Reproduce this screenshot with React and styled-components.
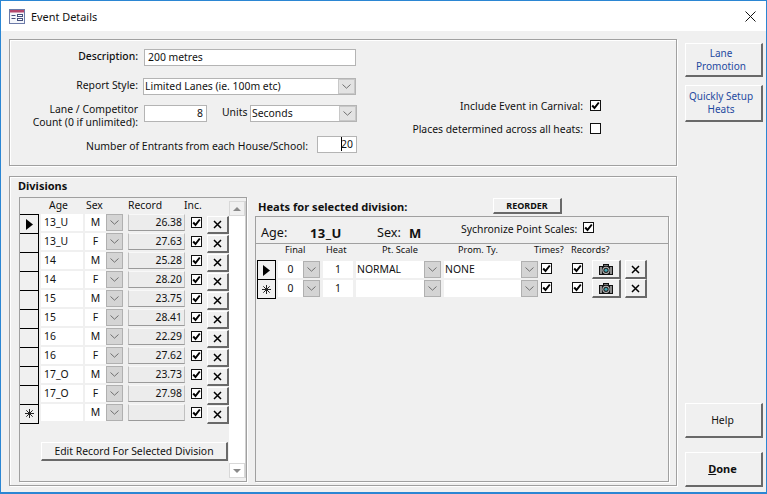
import React from "react";
import styled, { createGlobalStyle } from "styled-components";

const divisions = [
  { age: "13_U", sex: "M", record: "26.38", current: true },
  { age: "13_U", sex: "F", record: "27.63" },
  { age: "14", sex: "M", record: "25.28" },
  { age: "14", sex: "F", record: "28.20" },
  { age: "15", sex: "M", record: "23.75" },
  { age: "15", sex: "F", record: "28.41" },
  { age: "16", sex: "M", record: "22.29" },
  { age: "16", sex: "F", record: "27.62" },
  { age: "17_O", sex: "M", record: "23.73" },
  { age: "17_O", sex: "F", record: "27.98" },
  { age: "", sex: "M", record: "", isNew: true },
];

const heats = [
  { final: "0", heat: "1", scale: "NORMAL", prom: "NONE", current: true },
  { final: "0", heat: "1", scale: "", prom: "", isNew: true },
];

const heatHeads = [
  ["Final", 41],
  ["Heat", 56],
  ["Pt. Scale", 76],
  ["Prom. Ty.", 76],
  ["Times?", 37],
  ["Records?", 40],
];

const Chevron = () => (
  <svg width="9" height="5" viewBox="0 0 9 5">
    <path d="M0.5 0.5 L4.5 4.2 L8.5 0.5" fill="none" stroke="#707070" />
  </svg>
);

const CheckBox = ({ checked = true }) => (
  <CheckFrame>
    {checked && (
      <svg width="9" height="9" viewBox="0 0 9 9">
        <path d="M1.2 4.5 L3.5 7 L7.8 1.5" fill="none" stroke="#000" strokeWidth="2" />
      </svg>
    )}
  </CheckFrame>
);

const Cross = () => (
  <svg width="9" height="9" viewBox="0 0 9 9">
    <path d="M1 1 L8 8 M8 1 L1 8" stroke="#000" strokeWidth="1.5" />
  </svg>
);

const Camera = () => (
  <svg width="14" height="11" viewBox="0 0 14 11">
    <path d="M4 0 H10 V2 H14 V11 H0 V2 H4 Z" fill="#111" />
    <rect x="5" y="1" width="4" height="1" fill="#777" />
    <rect x="1" y="3" width="2" height="7" fill="#8c8c8c" />
    <rect x="11" y="3" width="2" height="7" fill="#8c8c8c" />
    <circle cx="7" cy="6.3" r="3.6" fill="#bbb" />
    <circle cx="7" cy="6.3" r="2.6" fill="#222" />
    <circle cx="7" cy="6.3" r="1.5" fill="#3fa7b5" />
  </svg>
);

const Marker = ({ isNew, current }) => (
  <>
    {current && (
      <svg width="7" height="11" viewBox="0 0 7 11">
        <path d="M0 0 L7 5.5 L0 11 Z" fill="#000" />
      </svg>
    )}
    {isNew && (
      <svg width="9" height="9" viewBox="0 0 9 9">
        <path d="M4.5 0 V9 M0 4.5 H9 M1.3 1.3 L7.7 7.7 M7.7 1.3 L1.3 7.7" stroke="#222" strokeWidth="1" />
      </svg>
    )}
  </>
);

const Combo = ({ $muted }) => (
  <ComboButton $muted={$muted}>
    <Chevron />
  </ComboButton>
);

export default function App() {
  return (
    <>
      <GlobalStyle />
      <Dialog>
        <TitleBar>
          <svg width="16" height="15" viewBox="0 0 16 15">
            <rect x="0.5" y="0.5" width="15" height="14" fill="#f4f6fb" stroke="#6b7aa8" />
            <rect x="1" y="1" width="14" height="2.5" fill="#b4476c" />
            <path d="M2.5 6.5 H6.5 M2.5 9.5 H6.5" stroke="#44507c" />
            <rect x="8.5" y="5.5" width="5" height="2" fill="#fff" stroke="#44507c" />
            <rect x="8.5" y="9.5" width="5" height="2" fill="#fff" stroke="#44507c" />
          </svg>
          <TitleText>Event Details</TitleText>
          <CloseIcon width="11" height="11" viewBox="0 0 11 11">
            <path d="M0.5 0.5 L10.5 10.5 M10.5 0.5 L0.5 10.5" stroke="#111" />
          </CloseIcon>
        </TitleBar>

        <Body>
          <MainColumn>
            <TopPanel>
              <FormColumn>
                <FormRow $top={0}>
                  <RowLabel $strong $shift={1}>Description:</RowLabel>
                  <Field $width={212}>200 metres</Field>
                </FormRow>
                <FormRow $top={12}>
                  <RowLabel $shift={1}>Report Style:</RowLabel>
                  <ComboField $width={213}>
                    <ComboText>Limited Lanes (ie. 100m etc)</ComboText>
                    <Combo />
                  </ComboField>
                </FormRow>
                <FormRow $top={10}>
                  <RowLabel $shift={-2}>
                    Lane / Competitor
                    <br />
                    Count (0 if unlimited):
                  </RowLabel>
                  <Field $width={63} $right>8</Field>
                  <UnitsLabel>Units</UnitsLabel>
                  <ComboField $width={107}>
                    <ComboText>Seconds</ComboText>
                    <Combo />
                  </ComboField>
                </FormRow>
                <EntrantsRow>
                  <EntrantsLabel>Number of Entrants from each House/School:</EntrantsLabel>
                  <Field $width={40} $right>
                    <Caret />
                    20
                  </Field>
                </EntrantsRow>
              </FormColumn>
              <OptionsColumn>
                <OptionRow>
                  <span>Include Event in Carnival:</span>
                  <CheckBox />
                </OptionRow>
                <OptionRow>
                  <span>Places determined across all heats:</span>
                  <CheckBox checked={false} />
                </OptionRow>
              </OptionsColumn>
            </TopPanel>

            <BottomPanel>
              <DivisionsColumn>
                <SectionTitle>Divisions</SectionTitle>
                <DivisionsBox>
                  <DivisionsList>
                    <DivisionHead>
                      <HeadLabel $width={37} $pad={29}>Age</HeadLabel>
                      <HeadLabel $width={42}>Sex</HeadLabel>
                      <HeadLabel $width={56}>Record</HeadLabel>
                      <HeadLabel $width={30}>Inc.</HeadLabel>
                    </DivisionHead>
                    {divisions.map((d, idx) => (
                      <DivisionRow key={idx}>
                        <RowMarker $first={idx === 0}>
                          <Marker isNew={d.isNew} current={d.current} />
                        </RowMarker>
                        <GridCell>{d.age}</GridCell>
                        <SexCell>
                          <SexText>{d.sex}</SexText>
                          <Combo $muted />
                        </SexCell>
                        <RecordCell>{d.record}</RecordCell>
                        <CheckCell>
                          <CheckBox />
                        </CheckCell>
                        <CrossButton $top={2}>
                          <Cross />
                        </CrossButton>
                      </DivisionRow>
                    ))}
                    <EditButton>Edit Record For Selected Division</EditButton>
                  </DivisionsList>
                  <ScrollBar>
                    <ScrollArrow>
                      <ArrowUp />
                    </ScrollArrow>
                    <ScrollTrack />
                    <ScrollArrow $plain>
                      <ArrowDown />
                    </ScrollArrow>
                  </ScrollBar>
                </DivisionsBox>
              </DivisionsColumn>

              <HeatsColumn>
                <HeatsTitleRow>
                  <HeatsTitle>Heats for selected division:</HeatsTitle>
                  <ReorderButton>REORDER</ReorderButton>
                </HeatsTitleRow>
                <HeatsBox>
                  <HeatsInfo>
                    <InfoLabel $width={49}>Age:</InfoLabel>
                    <InfoValue $width={67}>13_U</InfoValue>
                    <InfoLabel $width={32}>Sex:</InfoLabel>
                    <InfoValue $width={52}>M</InfoValue>
                    <SyncLabel>Sychronize Point Scales:</SyncLabel>
                    <SyncCheck>
                      <CheckBox />
                    </SyncCheck>
                  </HeatsInfo>
                  <HeatsHead>
                    {heatHeads.map(([label, width]) => (
                      <HeatHeadLabel key={label} $width={width}>
                        {label}
                      </HeatHeadLabel>
                    ))}
                  </HeatsHead>
                  {heats.map((h, idx) => (
                    <HeatRow key={idx}>
                      <HeatMarker>
                        <Marker isNew={h.isNew} current={h.current} />
                      </HeatMarker>
                      <HeatCell $center>
                        <HeatValue>{h.final}</HeatValue>
                        <Combo $muted />
                      </HeatCell>
                      <HeatCell $center>
                        <HeatValue>{h.heat}</HeatValue>
                      </HeatCell>
                      <HeatCell>
                        <HeatValue>{h.scale}</HeatValue>
                        <Combo $muted />
                      </HeatCell>
                      <HeatCell>
                        <HeatValue>{h.prom}</HeatValue>
                        <Combo $muted />
                      </HeatCell>
                      <CheckCell>
                        <CheckBox />
                      </CheckCell>
                      <CheckCell>
                        <CheckBox />
                      </CheckCell>
                      <CameraButton>
                        <Camera />
                      </CameraButton>
                      <CrossButton>
                        <Cross />
                      </CrossButton>
                    </HeatRow>
                  ))}
                </HeatsBox>
              </HeatsColumn>
            </BottomPanel>
          </MainColumn>

          <SideColumn>
            <SideButton $height={34} $blue>
              Lane
              <br />
              Promotion
            </SideButton>
            <SideButton $height={37} $blue $top={8}>
              Quickly Setup
              <br />
              Heats
            </SideButton>
            <SideButton $height={35} $top={281}>Help</SideButton>
            <SideButton $height={35} $top={14} $strong>
              <u>D</u>one
            </SideButton>
          </SideColumn>
        </Body>
      </Dialog>
    </>
  );
}

const GlobalStyle = createGlobalStyle`
  html, body {
    margin: 0;
    padding: 0;
    background: #f0f0f0;
  }
  body {
    font-family: "Noto Sans", "Liberation Sans", sans-serif;
    font-size: 10.4px;
    color: #111;
  }
  * {
    box-sizing: border-box;
  }
`;

const raised = `
  background: #f0f0f0;
  border-top: 1px solid #fff;
  border-left: 1px solid #fff;
  border-right: 2px solid #696969;
  border-bottom: 2px solid #696969;
`;

const Dialog = styled.div`
  width: 767px;
  height: 494px;
  border: 1px solid #2b86d3;
  border-bottom-width: 2px;
  background: #f0f0f0;
  overflow: hidden;
`;

const TitleBar = styled.div`
  display: flex;
  align-items: center;
  height: 30px;
  padding: 0 10px 0 8px;
  background: #fff;
`;

const TitleText = styled.div`
  margin-left: 6px;
  font-size: 10.9px;
`;

const CloseIcon = styled.svg`
  margin-left: auto;
`;

const Body = styled.div`
  display: flex;
  gap: 8px;
  padding: 8px 0 0 8px;
`;

const MainColumn = styled.div`
  display: flex;
  flex-direction: column;
  gap: 10px;
  width: 668px;
`;

const Panel = styled.div`
  display: flex;
  border: 1px solid #a0a0a0;
  box-shadow: 1px 1px 0 #fff, inset 1px 1px 0 #fff;
`;

const TopPanel = styled(Panel)`
  height: 127px;
  padding-top: 9px;
`;

const FormColumn = styled.div`
  width: 347px;
  display: flex;
  flex-direction: column;
`;

const FormRow = styled.div`
  display: flex;
  align-items: flex-start;
  height: 17px;
  margin-top: ${(p) => p.$top}px;
`;

const RowLabel = styled.div`
  width: 128px;
  margin: ${(p) => p.$shift}px 6px 0 0;
  flex-shrink: 0;
  text-align: right;
  line-height: 13px;
  font-weight: ${(p) => (p.$strong ? 500 : 400)};
`;

const Field = styled.div`
  width: ${(p) => p.$width}px;
  height: 17px;
  padding: 0 3px;
  line-height: 15px;
  background: #fff;
  border: 1px solid #b4b4b4;
  text-align: ${(p) => (p.$right ? "right" : "left")};
`;

const Caret = styled.span`
  display: inline-block;
  width: 1px;
  height: 14px;
  margin-right: -1px;
  vertical-align: -3px;
  background: #000;
`;

const ComboField = styled.div`
  display: flex;
  width: ${(p) => p.$width}px;
  height: 17px;
  margin-left: -1px;
  background: #fff;
  border: 1px solid #b4b4b4;
`;

const ComboText = styled.div`
  flex: 1;
  padding-left: 1px;
  line-height: 15px;
`;

const ComboButton = styled.div`
  flex-shrink: 0;
  width: 17px;
  display: flex;
  align-items: center;
  justify-content: center;
  background: ${(p) => (p.$muted ? "#d4d4d4" : "#e3e3e3")};
  border: 1px solid ${(p) => (p.$muted ? "#b0b0b0" : "#c8c8c8")};
`;

const UnitsLabel = styled.div`
  width: 29px;
  margin-left: 15px;
  line-height: 15px;
`;

const EntrantsRow = styled.div`
  display: flex;
  justify-content: flex-end;
  align-items: center;
  gap: 9px;
  height: 17px;
  margin-top: 14px;
`;

const EntrantsLabel = styled.span`
  padding-top: 2px;
`;

const OptionsColumn = styled.div`
  width: 244px;
  padding-top: 50px;
  display: flex;
  flex-direction: column;
  gap: 10px;
`;

const OptionRow = styled.div`
  display: flex;
  justify-content: flex-end;
  align-items: center;
  gap: 7px;
  height: 13px;
`;

const CheckFrame = styled.div`
  flex-shrink: 0;
  display: flex;
  align-items: center;
  justify-content: center;
  width: 11px;
  height: 11px;
  background: #fff;
  border: 1px solid #111;
`;

const BottomPanel = styled(Panel)`
  height: 310px;
  padding: 1px 0 0 8px;
  gap: 8px;
`;

const SectionTitle = styled.div`
  font-size: 11px;
  font-weight: 700;
  line-height: 15px;
`;

const DivisionsColumn = styled.div`
  width: 229px;
  display: flex;
  flex-direction: column;
`;

const DivisionsBox = styled.div`
  display: flex;
  height: 285px;
  margin: 4px 0 0 1px;
  border: 1px solid #a0a0a0;
  box-shadow: 1px 1px 0 #fff;
`;

const DivisionsList = styled.div`
  width: 210px;
  display: flex;
  flex-direction: column;
`;

const DivisionHead = styled.div`
  display: flex;
  height: 16px;
`;

const HeadLabel = styled.div`
  width: ${(p) => p.$width + (p.$pad || 0)}px;
  padding-left: ${(p) => p.$pad || 0}px;
  line-height: 14px;
`;

const DivisionRow = styled.div`
  display: grid;
  grid-template-columns: 21px 44px 43px 63px 16px 22px;
  height: 19px;
`;

const RowMarker = styled.div`
  display: flex;
  align-items: center;
  justify-content: center;
  width: 19px;
  border-right: 1px solid #000;
  border-bottom: 1px solid #000;
  border-top: ${(p) => (p.$first ? "1px solid #000" : "0")};
`;

const GridCell = styled.div`
  width: 42px;
  height: 17px;
  padding-left: 3px;
  line-height: 16px;
  background: #fff;
`;

const SexCell = styled.div`
  display: flex;
  width: 38px;
  height: 17px;
  background: #fff;
`;

const SexText = styled.div`
  flex: 1;
  text-align: center;
  line-height: 16px;
`;

const RecordCell = styled.div`
  width: 57px;
  height: 17px;
  padding-right: 2px;
  text-align: right;
  line-height: 14px;
  background: #ececec;
  border-left: 1px solid #c0c0c0;
  border-top: 1px solid #f8f8f8;
  border-bottom: 1px solid #9a9a9a;
  border-right: 1px solid #c0c0c0;
`;

const CheckCell = styled.div`
  display: flex;
  align-items: flex-start;
  padding-top: 3px;
`;

const CrossButton = styled.div`
  ${raised}
  display: flex;
  align-items: center;
  justify-content: center;
  width: 22px;
  height: ${(p) => (p.$top ? 18 : 19)}px;
  margin-top: ${(p) => p.$top || 0}px;
`;

const EditButton = styled.div`
  ${raised}
  width: 187px;
  height: 19px;
  margin: 19px 0 0 21px;
  text-align: center;
  line-height: 16px;
`;

const ScrollBar = styled.div`
  display: flex;
  flex-direction: column;
  width: 17px;
  margin: 3px 0;
  background: #fff;
  border-right: 1px solid #d0d0d0;
`;

const ScrollArrow = styled.div`
  display: flex;
  align-items: center;
  justify-content: center;
  height: 15px;
  background: ${(p) => (p.$plain ? "#fff" : "#f0f0f0")};
  border: 1px solid #d8d8d8;
`;

const ArrowUp = styled.div`
  border-left: 4px solid transparent;
  border-right: 4px solid transparent;
  border-bottom: 4px solid #8a8a8a;
`;

const ArrowDown = styled.div`
  border-left: 4px solid transparent;
  border-right: 4px solid transparent;
  border-top: 4px solid #8a8a8a;
`;

const ScrollTrack = styled.div`
  flex: 1;
`;

const HeatsColumn = styled.div`
  width: 414px;
  display: flex;
  flex-direction: column;
`;

const HeatsTitleRow = styled.div`
  display: flex;
  align-items: flex-end;
  height: 16px;
  margin-top: 20px;
  margin-bottom: 2px;
  padding-left: 3px;
`;

const HeatsTitle = styled(SectionTitle)`
  width: 235px;
  font-size: 11.1px;
`;

const ReorderButton = styled.div`
  ${raised}
  width: 69px;
  height: 16px;
  font-size: 9px;
  font-weight: 700;
  text-align: center;
  line-height: 13px;
`;

const HeatsBox = styled.div`
  height: 266px;
  border: 1px solid #a0a0a0;
  box-shadow: 1px 1px 0 #fff;
`;

const HeatsInfo = styled.div`
  display: flex;
  align-items: center;
  height: 27px;
  padding-left: 5px;
  border-bottom: 1px solid #a0a0a0;
`;

const InfoLabel = styled.div`
  width: ${(p) => p.$width}px;
  padding-top: 4px;
  font-size: 12.6px;
`;

const InfoValue = styled.div`
  width: ${(p) => p.$width}px;
  padding-top: 5px;
  font-size: 13px;
  font-weight: 700;
  letter-spacing: 0.4px;
`;

const SyncLabel = styled.div`
  width: 122px;
  white-space: nowrap;
  padding-bottom: 3px;
`;

const SyncCheck = styled.div`
  padding-bottom: 5px;
`;

const HeatsHead = styled.div`
  display: flex;
  height: 16px;
  padding-left: 29px;
`;

const HeatHeadLabel = styled.div`
  width: ${(p) => p.$width}px;
  font-size: 9.2px;
  line-height: 12px;
`;

const HeatRow = styled.div`
  display: grid;
  grid-template-columns: 21px 45px 33px 88px 97px 31px 20px 33px 22px;
  height: 19px;
  padding-left: 1px;
`;

const HeatMarker = styled.div`
  display: flex;
  align-items: center;
  justify-content: center;
  width: 19px;
  border: 1px solid #000;
  margin-bottom: -1px;
`;

const HeatCell = styled.div`
  display: flex;
  height: 17px;
  margin: 1px 3px 0 0;
  background: #fff;
  text-align: ${(p) => (p.$center ? "center" : "left")};
`;

const HeatValue = styled.div`
  flex: 1;
  padding: 0 1px;
  line-height: 16px;
`;

const CameraButton = styled.div`
  ${raised}
  display: flex;
  align-items: center;
  justify-content: center;
  width: 29px;
  height: 19px;
`;

const SideColumn = styled.div`
  display: flex;
  flex-direction: column;
  width: 78px;
  padding-top: 4px;
`;

const SideButton = styled.div`
  ${raised}
  display: flex;
  align-items: center;
  justify-content: center;
  text-align: center;
  height: ${(p) => p.$height}px;
  margin-top: ${(p) => p.$top || 0}px;
  padding-right: ${(p) => (p.$blue ? 5 : 2)}px;
  padding-bottom: ${(p) => (p.$strong ? 1 : 0)}px;
  line-height: 13px;
  color: ${(p) => (p.$blue ? "#1f4aa0" : "#111")};
  font-size: ${(p) => (p.$strong ? "11px" : p.$blue ? "10px" : "inherit")};
  font-weight: ${(p) => (p.$strong ? 700 : 400)};
`;
